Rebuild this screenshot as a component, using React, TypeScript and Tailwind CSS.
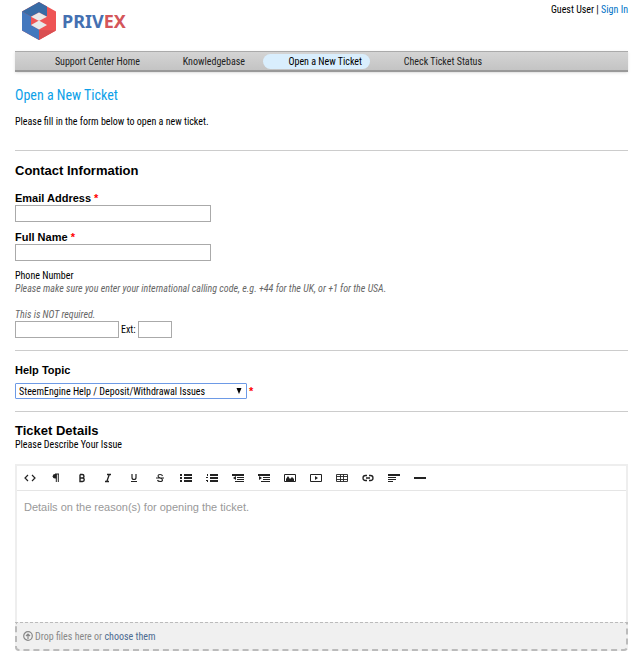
import React, { useState } from 'react';

const HELP_TOPICS = [
    'SteemEngine Help / Deposit/Withdrawal Issues',
    'General Inquiry',
    'Billing',
];

const NAV_ITEMS = [
    { label: 'Support Center Home', className: 'ml-[9px] w-[124px]' },
    { label: 'Knowledgebase', className: 'ml-[5px] w-[100px]' },
    { label: 'Open a New Ticket', className: 'ml-[10px] w-[107px] bg-[#d9eefd] text-black', active: true },
    { label: 'Check Ticket Status', className: 'w-[120px]' },
];

const TOOLS: { label: string; icon: React.ReactNode }[] = [
    { label: 'HTML', icon: <path d="M4 3 1 6 4 9M8 3l3 3L8 9" fill="none" stroke="currentColor" strokeWidth="1.200" /> },
    {
        label: 'Formatting',
        icon: (
            <>
                <path d="M6.500 2H5a2.300 2.300 0 0 0 0 4.600h1.500z" />
                <path d="M5 2h4M6.300 2v8M8.300 2v8" fill="none" stroke="currentColor" />
            </>
        ),
    },
    {
        label: 'Bold',
        icon: <path d="M4 2.500v7h2.500a1.700 1.700 0 0 0 0-3.500H4M4 6h2.200a1.600 1.600 0 0 0 0-3.500H4" fill="none" stroke="currentColor" strokeWidth="1.400" />,
    },
    { label: 'Italic', icon: <path d="M5 2.500h4M3 9.500h4M7.300 2.500 4.800 9.500" fill="none" stroke="currentColor" strokeWidth="1.300" /> },
    { label: 'Underline', icon: <path d="M4 2v3.500a2 2 0 0 0 4 0V2M3 9.500h6" fill="none" stroke="currentColor" strokeWidth="1.200" /> },
    {
        label: 'Deleted',
        icon: <path d="M8.500 4C8 2 4 2 4 4s4.500 2 4.500 4-4.500 2-5 0M2 6h8" fill="none" stroke="currentColor" strokeWidth="1.100" />,
    },
    {
        label: 'Unordered List',
        icon: <path d="M0 2h2v2H0zM0 5h2v2H0zM0 8h2v2H0zM4 2h8v2H4zM4 5h8v2H4zM4 8h8v2H4z" />,
    },
    { label: 'Ordered List', icon: <path d="M1 2h1v2H1zM0 5h2v1H0zM0 8h2v1H0zM1 9h1v1H1zM4 2h8v2H4zM4 5h8v2H4zM4 8h8v2H4z" /> },
    { label: 'Outdent', icon: <path d="M0 2h12v2H0zM5 5h7v1H5zM5 7h7v1H5zM3 9h9v1H3zM4 4v4L1 6z" /> },
    { label: 'Indent', icon: <path d="M0 2h12v2H0zM5 5h7v1H5zM5 7h7v1H5zM3 9h9v1H3zM1 4v4l3-2z" /> },
    {
        label: 'Image',
        icon: (
            <>
                <path d="M.5 2.500h11v7H.5z" fill="none" stroke="currentColor" />
                <path d="M2 9V7l2-3 2 3 2-2 2 2v2z" />
            </>
        ),
    },
    {
        label: 'Video',
        icon: (
            <>
                <path d="M.5 2.500h11v7H.5z" fill="none" stroke="currentColor" />
                <path d="M5 4v4l3-2z" />
            </>
        ),
    },
    { label: 'Table', icon: <path d="M.5 2.500h11v7H.5zM.5 4.500h11M.5 7.500h11M4.500 2.500v7M7.500 2.500v7" fill="none" stroke="currentColor" strokeWidth=".9" /> },
    {
        label: 'Link',
        icon: <path d="M5 8.500H3.500a2.500 2.500 0 0 1 0-5H5M7 3.500h1.500a2.500 2.500 0 0 1 0 5H7M4 6h4" fill="none" stroke="currentColor" strokeWidth="1.300" />,
    },
    { label: 'Align', icon: <path d="M0 2h12v2H0zM0 5h8v1H0zM0 7h8v1H0zM0 9h5v1H0z" /> },
    { label: 'Horizontal Rule', icon: <path d="M0 5h12v2H0z" /> },
];

const Logo: React.FC = () => (
    <a href="#" aria-label="Privex" className="ml-[7px] flex items-center gap-[6px]">
        <svg viewBox="0 0 34 38" className="h-[38px] w-[34px]">
            <path d="M17 0 34 9.500v19L17 38 0 28.500V9.500z" fill="#ee5455" />
            <path d="M0 9.500 9 14.500V23l8 4.500V38L0 28.500z" fill="#4478be" />
            <path d="M17 0l8 4.500v10L17 10.500 9 14.500 0 9.500z" fill="#386ba5" />
            <path d="M17 28 34 28.500 17 38z" fill="#d94e51" />
            <path d="M17 10.500 25 14.700 17 19 9 14.700zM17 18.500 25 23 17 27.500 9 23z" fill="#e9e9e9" />
        </svg>
        <span className="font-['Noto_Sans',sans-serif] text-[18px] leading-6 font-bold text-[#4470b1]">
            PRIV<span className="text-[#d4565a]">EX</span>
        </span>
    </a>
);

const Required: React.FC = () => <span className="font-['Liberation_Sans',sans-serif] text-[11px] font-bold text-[#f00]">*</span>;

const inputClass = 'block h-[17px] border border-[#aaa] bg-white px-1 text-[11px] outline-none';

const App: React.FC = () => {
    const [topic, setTopic] = useState(HELP_TOPICS[0]);
    const [details, setDetails] = useState('');

    return (
        <div className="bg-white pr-3 pb-5 pl-[15px] font-['Roboto_Condensed','Liberation_Sans',sans-serif] text-[10px] leading-[13px] text-black">
            {/* Header */}
            <header className="flex h-[51px] items-start justify-between pt-[2px]">
                <Logo />
                <p className="pt-px">
                    Guest User | <a href="#" className="text-[#0072c6]">Sign In</a>
                </p>
            </header>

            <nav className="flex h-[21px] items-center border-t border-b-2 border-t-[#aaa] border-b-[#999] bg-linear-to-b from-[#d4d4d4] to-[#c4c4c4] text-[#222] shadow-sm">
                {NAV_ITEMS.map(item => (
                    <a
                        key={item.label}
                        href="#"
                        aria-current={item.active ? 'page' : undefined}
                        className={`h-[15px] rounded-full pr-2 text-right leading-[15px] whitespace-nowrap ${item.className}`}
                    >
                        {item.label}
                    </a>
                ))}
            </nav>

            <main>
                <h1 className="mt-[14px] text-[14px] leading-[18px] text-[#0d9fe8]">Open a New Ticket</h1>
                <p className="mt-[11px]">Please fill in the form below to open a new ticket.</p>

                <form onSubmit={e => e.preventDefault()}>
                    {/* Contact details */}
                    <section className="mt-[22px] border-t border-[#ccc] pt-3 pb-3">
                        <h2 className="font-['Liberation_Sans',sans-serif] text-[13px] leading-4 font-bold">Contact Information</h2>
                        <label htmlFor="email" className="mt-3 block font-['Liberation_Sans',sans-serif] text-[11px] leading-[14px] font-bold">
                            Email Address <Required />
                        </label>
                        <input id="email" type="email" className={`${inputClass} w-[196px]`} />
                        <label htmlFor="name" className="mt-2 block font-['Liberation_Sans',sans-serif] text-[11px] leading-[14px] font-bold">
                            Full Name <Required />
                        </label>
                        <input id="name" type="text" className={`${inputClass} w-[196px]`} />
                        <label htmlFor="phone" className="mt-2 block">Phone Number</label>
                        <p className="text-[#666] italic">
                            Please make sure you enter your international calling code, e.g. +44 for the UK, or +1 for the USA.
                        </p>
                        <p className="mt-[13px] text-[#666] italic">This is NOT required.</p>
                        <div className="flex items-center gap-[2px]">
                            <input id="phone" type="tel" className={`${inputClass} w-[104px]`} />
                            <label htmlFor="ext">Ext:</label>
                            <input id="ext" type="text" className={`${inputClass} w-[34px]`} />
                        </div>
                    </section>

                    {/* Help topic */}
                    <section className="border-t border-[#ccc] pt-3 pb-3">
                        <label htmlFor="topic" className="block font-['Liberation_Sans',sans-serif] text-[11px] leading-[14px] font-bold">Help Topic</label>
                        <div className="mt-[6px] flex items-center gap-[2px]">
                            <div className="relative">
                                <select
                                    id="topic"
                                    value={topic}
                                    onChange={e => setTopic(e.target.value)}
                                    className="block h-4 w-[232px] appearance-none rounded-[1px] border border-[#6d9ae6] bg-white pl-[3px] leading-[13px] outline-none"
                                >
                                    {HELP_TOPICS.map(t => (
                                        <option key={t}>{t}</option>
                                    ))}
                                </select>
                                <svg viewBox="0 0 6 6" className="pointer-events-none absolute top-[5px] right-[5px] h-[6px] w-[6px]">
                                    <path d="M.5 0h5L3 6z" />
                                </svg>
                            </div>
                            <Required />
                        </div>
                    </section>

                    {/* Ticket body */}
                    <section className="border-t border-[#ccc] pt-3">
                        <h2 className="font-['Liberation_Sans',sans-serif] text-[13px] leading-[14px] font-bold">Ticket Details</h2>
                        <label htmlFor="details" className="block">Please Describe Your Issue</label>
                        <div className="mt-[13px] border-2 border-b-0 border-[#eee]">
                            <div className="flex h-[25px] items-center border-b border-[#e5e5e5]">
                                {TOOLS.map(tool => (
                                    <button key={tool.label} type="button" aria-label={tool.label} className="flex w-[26px] justify-center text-[#222]">
                                        <svg viewBox="0 0 12 12" fill="currentColor" className="h-3 w-3">
                                            {tool.icon}
                                        </svg>
                                    </button>
                                ))}
                            </div>
                            <textarea
                                id="details"
                                value={details}
                                onChange={e => setDetails(e.target.value)}
                                placeholder="Details on the reason(s) for opening the ticket."
                                className="block h-[131px] w-full resize-none px-[7px] py-2 font-['Liberation_Sans',sans-serif] text-[11px] leading-4 outline-none placeholder:text-[#999]"
                            />
                        </div>
                        <div className="flex h-[29px] items-center gap-[2px] rounded-b-sm border-2 border-t border-dashed border-[#bbb] bg-[#f0f0f0] pl-[6px] text-[#888]">
                            <svg viewBox="0 0 10 10" fill="none" stroke="currentColor" strokeWidth="1.200" className="h-[10px] w-[10px]">
                                <circle cx="5" cy="5" r="4.300" />
                                <path d="M5 8V3M3 5l2-2 2 2" />
                            </svg>
                            <span>
                                Drop files here or <a href="#" className="text-[#4c6b91]">choose them</a>
                            </span>
                        </div>
                    </section>
                </form>
            </main>
        </div>
    );
};

export default App;
